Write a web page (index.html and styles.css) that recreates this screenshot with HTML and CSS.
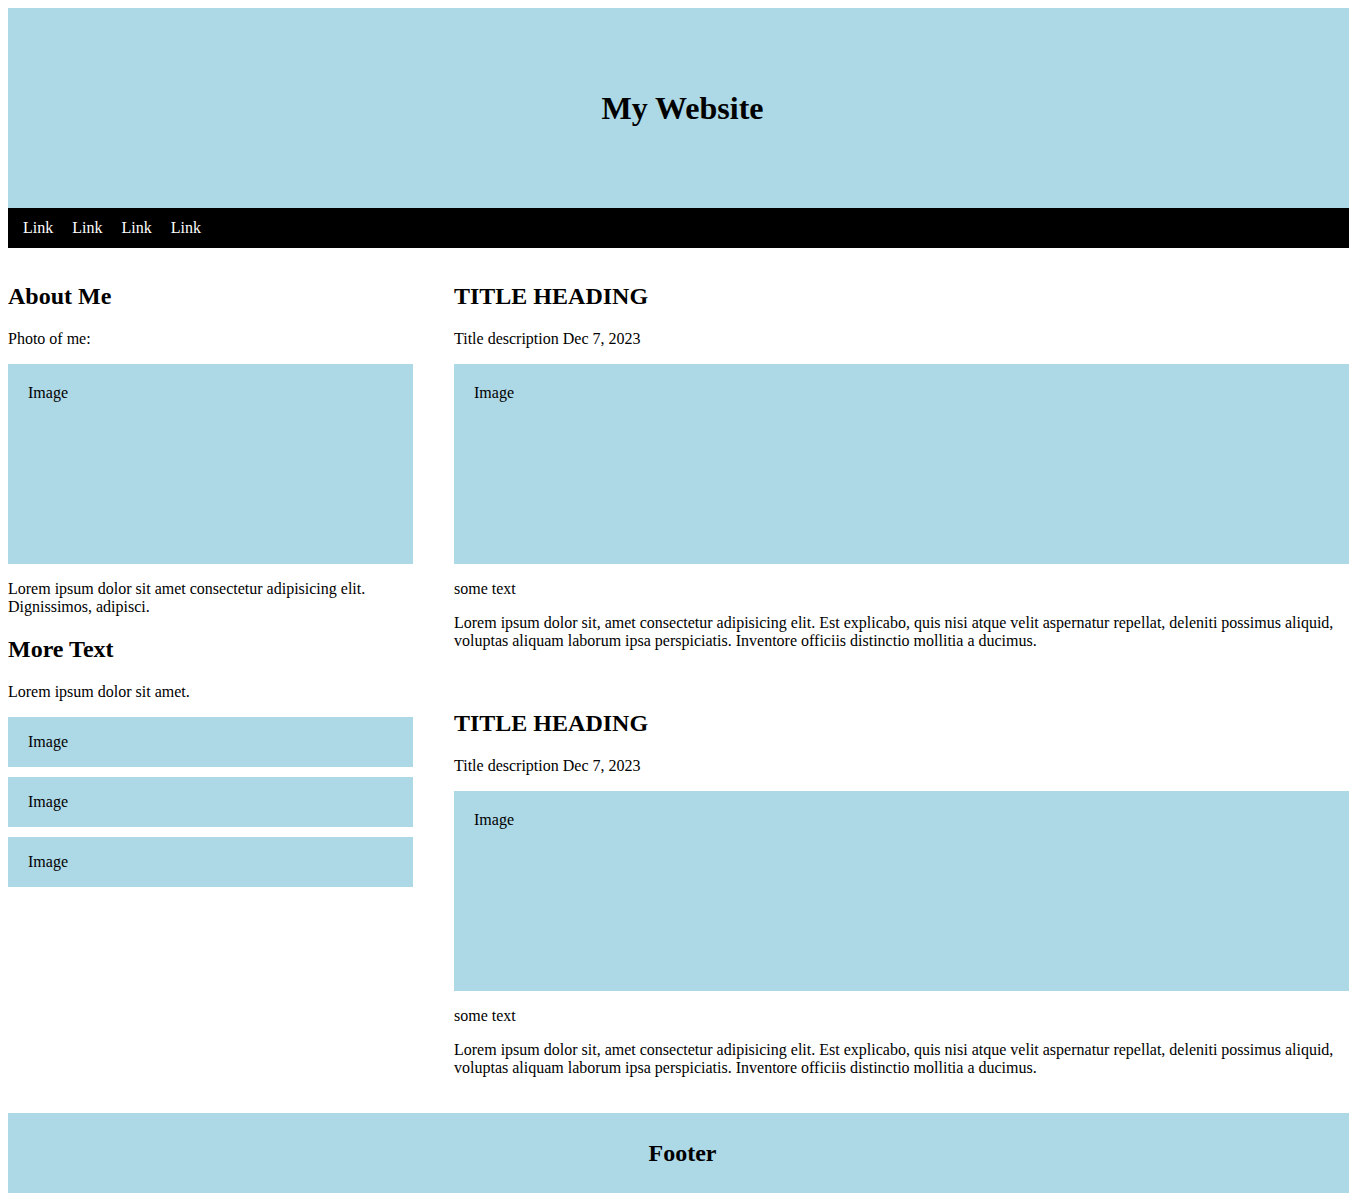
FILE: index.html
```html
<!DOCTYPE html>
<html lang="en">
<head>
<meta charset="utf-8">
<title>My Website</title>
<link rel="stylesheet" href="styles.css">
</head>
<body>
  <header class="site-header">
    <h1 class="site-title">My Website</h1>
  </header>
  <nav class="site-nav">
    <a class="nav-link" href="#">Link</a>
    <a class="nav-link" href="#">Link</a>
    <a class="nav-link" href="#">Link</a>
    <a class="nav-link" href="#">Link</a>
  </nav>
  <main class="layout">
    <aside class="side">
      <h2 class="heading">About Me</h2>
      <p class="text">Photo of me:</p>
      <div class="img-box img-large">Image</div>
      <p class="text">Lorem ipsum dolor sit amet consectetur adipisicing elit. Dignissimos, adipisci.</p>
      <h2 class="heading">More Text</h2>
      <p class="text">Lorem ipsum dolor sit amet.</p>
      <div class="thumbs">
        <div class="img-box img-small">Image</div>
        <div class="img-box img-small">Image</div>
        <div class="img-box img-small">Image</div>
      </div>
    </aside>
    <section class="posts">
      <article class="card">
        <h2 class="heading">TITLE HEADING</h2>
        <p class="text">Title description Dec 7, 2023</p>
        <div class="img-box img-large">Image</div>
        <p class="text">some text</p>
        <p class="text">Lorem ipsum dolor sit, amet consectetur adipisicing elit. Est explicabo, quis nisi atque velit aspernatur repellat, deleniti possimus aliquid, voluptas aliquam laborum ipsa perspiciatis. Inventore officiis distinctio mollitia a ducimus.</p>
      </article>
      <article class="card">
        <h2 class="heading">TITLE HEADING</h2>
        <p class="text">Title description Dec 7, 2023</p>
        <div class="img-box img-large">Image</div>
        <p class="text">some text</p>
        <p class="text">Lorem ipsum dolor sit, amet consectetur adipisicing elit. Est explicabo, quis nisi atque velit aspernatur repellat, deleniti possimus aliquid, voluptas aliquam laborum ipsa perspiciatis. Inventore officiis distinctio mollitia a ducimus.</p>
      </article>
    </section>
  </main>
  <footer class="site-footer">
    <h2 class="footer-title">Footer</h2>
  </footer>
</body>
</html>
```
FILE: styles.css
```css
html {
  overflow: hidden;
}
body {
  margin: 8px;
  width: 1349px;
  font-family: "Liberation Serif", "Times New Roman", serif;
  font-size: 16px;
  color: #000;
  background: #fff;
}
.site-header {
  height: 200px;
  background: #add8e6;
  display: flex;
  align-items: center;
  justify-content: center;
}
.site-title {
  margin: 0;
  font-size: 32px;
  font-weight: bold;
}
.site-nav {
  height: 40px;
  background: #000;
  display: flex;
  align-items: center;
  gap: 19px;
  padding: 0 15px;
}
.nav-link {
  color: #fff;
  text-decoration: none;
}
.layout {
  display: grid;
  grid-template-columns: 405px 1fr;
  column-gap: 41px;
  padding-top: 15px;
}
.heading {
  font-size: 24px;
  margin: 20px 0;
}
.text {
  margin: 16px 0;
}
.img-box {
  background: #add8e6;
  padding: 0 20px;
}
.img-large {
  height: 200px;
  padding-top: 20px;
  box-sizing: border-box;
}
.thumbs {
  display: flex;
  flex-direction: column;
  gap: 10px;
}
.img-small {
  height: 50px;
  display: flex;
  align-items: center;
}
.posts {
  display: flex;
  flex-direction: column;
  gap: 24px;
}
.card {
  display: flow-root;
}
.site-footer {
  margin-top: 20px;
  height: 80px;
  background: #add8e6;
  display: flex;
  align-items: center;
  justify-content: center;
}
.footer-title {
  margin: 0;
  font-size: 24px;
}
```
